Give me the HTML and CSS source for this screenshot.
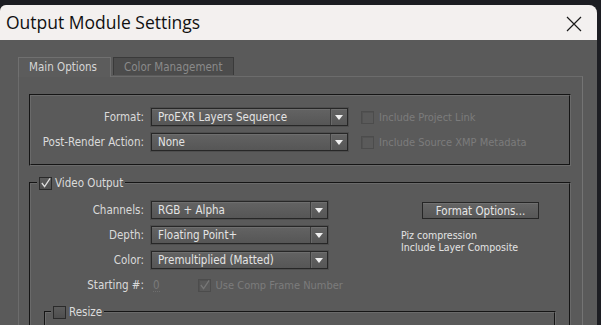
FILE: index.html
```html
<!DOCTYPE html>
<html lang="en">
<head>
    <meta charset="UTF-8">
    <title>Output Module Settings</title>
    <link rel="stylesheet" href="styles.css">
</head>
<body>

    <div class="window">
        <div class="titlebar">
            <span class="title">Output Module Settings</span>
            <svg class="close" width="16" height="16" viewBox="0 0 16 16">
                <path d="M1 1 L15 15 M15 1 L1 15" stroke="#1a1a1a" stroke-width="1.2" fill="none"/>
            </svg>
        </div>

        <div class="content">
            <div class="tabs">
                <div class="tab active">Main Options</div>
                <div class="tab">Color Management</div>
            </div>

            <div class="pane">
                <!-- 書き出し形式 -->
                <div class="group format-group">
                    <div class="form-row">
                        <span class="label">Format:</span>
                        <div class="select wide"><span class="value">ProEXR Layers Sequence</span><span class="arrow"></span></div>
                        <span class="check disabled"></span>
                        <span class="dim-text">Include Project Link</span>
                    </div>
                    <div class="form-row">
                        <span class="label">Post-Render Action:</span>
                        <div class="select wide"><span class="value">None</span><span class="arrow"></span></div>
                        <span class="check disabled"></span>
                        <span class="dim-text">Include Source XMP Metadata</span>
                    </div>
                </div>

                <!-- ビデオ出力 -->
                <fieldset class="group video-group">
                    <legend><span class="check checked">
                        <svg width="12" height="12" viewBox="0 0 12 12"><path d="M2 6 L5 10 L11 1" stroke="#dcdcdc" stroke-width="1.4" fill="none"/></svg>
                    </span>Video Output</legend>

                    <div class="video-body">
                        <div class="video-fields">
                            <div class="form-row">
                                <span class="label">Channels:</span>
                                <div class="select"><span class="value">RGB + Alpha</span><span class="arrow"></span></div>
                            </div>
                            <div class="form-row">
                                <span class="label">Depth:</span>
                                <div class="select"><span class="value">Floating Point+</span><span class="arrow"></span></div>
                            </div>
                            <div class="form-row">
                                <span class="label">Color:</span>
                                <div class="select"><span class="value">Premultiplied (Matted)</span><span class="arrow"></span></div>
                            </div>
                            <div class="form-row">
                                <span class="label">Starting #:</span>
                                <span class="start-num">0</span>
                                <span class="check disabled">
                                    <svg width="12" height="12" viewBox="0 0 12 12"><path d="M2 6 L5 10 L11 1" stroke="#777" stroke-width="1.4" fill="none"/></svg>
                                </span>
                                <span class="dim-text">Use Comp Frame Number</span>
                            </div>
                        </div>

                        <div class="video-side">
                            <button class="btn">Format Options...</button>
                            <div class="info">
                                Piz compression<br>
                                Include Layer Composite
                            </div>
                        </div>
                    </div>

                    <fieldset class="group resize-group">
                        <legend><span class="check"></span>Resize</legend>
                        <div class="resize-body"></div>
                    </fieldset>
                </fieldset>
            </div>
        </div>
    </div>

</body>
</html>
```

FILE: styles.css
```css
body {
    margin: 0;
    height: 325px;
    overflow: hidden;
    background-color: #1c1d22;
    font-family: "DejaVu Sans Condensed", "DejaVu Sans", sans-serif;
    font-stretch: condensed;
    font-size: 11.5px;
    color: #dcdcdc;
}

.window {
    margin-top: 5px;
    width: 597px;
    height: 320px;
    border-radius: 6px 8px 0 0;
    overflow: hidden;
    background-color: #5a5a5a;
}

.titlebar {
    height: 35px;
    background-color: #f3f0ef;
    display: flex;
    align-items: center;
    justify-content: space-between;
    padding: 0 15px 0 6px;
}

.title {
    font-family: "Open Sans", "Noto Sans", sans-serif;
    font-stretch: normal;
    font-size: 17.5px;
    color: #111;
    margin-top: -2px;
}

.close {
    margin-top: 2px;
}

.content {
    padding: 17px 14px 0 18px;
}

/* タブ */
.tabs {
    display: flex;
    gap: 2px;
    height: 19px;
}

.tab {
    box-sizing: border-box;
    width: 121px;
    padding-left: 10px;
    line-height: 18px;
    background-color: #4c4c4c;
    border: 1px solid #3a3a3a;
    border-bottom: none;
    color: #8a8a8a;
    height: 18px;
}

.tab.active {
    width: 93px;
    background-color: #5c5c5c;
    border-color: #707070;
    color: #d6d6d6;
    height: 20px;
    position: relative;
    z-index: 1;
}

.pane {
    border: 1px solid #6c6c6c;
    border-right-color: #747474;
    padding: 17px 11px 0 10px;
    height: 300px;
}

/* グループ枠 */
.group {
    border: 2px groove #6a6a6a;
    margin: 0;
    padding: 0;
}

.format-group {
    padding: 12px 0 13px;
    display: flex;
    flex-direction: column;
    gap: 7px;
}

.form-row {
    display: flex;
    align-items: center;
    height: 18px;
    white-space: nowrap;
}

.label {
    width: 113px;
    margin-right: 7px;
    text-align: right;
    color: #dadada;
}

.select {
    width: 175px;
    height: 16px;
    border: 1px solid #272727;
    background: linear-gradient(#636363, #565656);
    box-shadow: inset 0 1px 0 #6e6e6e, 0 0 0 1px #4e4e4e;
    display: flex;
    align-items: center;
    color: #e4e4e4;
}

.select.wide {
    width: 195px;
}

.select .value {
    flex: 1;
    padding-left: 6px;
}

.arrow {
    width: 16px;
    height: 16px;
    border-left: 1px solid #3c3c3c;
    box-shadow: inset 1px 0 0 #6a6a6a;
    display: flex;
    align-items: center;
    justify-content: center;
}

.arrow::after {
    content: "";
    border-left: 4px solid transparent;
    border-right: 4px solid transparent;
    border-top: 5px solid #f0f0f0;
}

.check {
    display: inline-flex;
    align-items: center;
    justify-content: center;
    width: 11px;
    height: 11px;
    border: 1px solid #2a2a2a;
    background: linear-gradient(#5c5c5c, #4e4e4e);
    flex-shrink: 0;
}

.check.disabled {
    border-color: #4c4c4c;
    background: #5a5a5a;
    box-shadow: inset 1px 1px 0 #525252;
}

.format-group .check {
    margin-left: 13px;
    margin-right: 5px;
}

.dim-text {
    font-size: 11px;
    color: #7c7c7c;
}

/* ビデオ出力 */
.video-group {
    margin-top: 10px;
    height: 200px;
}

.video-group legend,
.resize-group legend {
    display: flex;
    align-items: center;
    gap: 3px;
    padding: 0 2px;
    font-size: 11.5px;
}

.video-group > legend {
    margin-left: 6px;
}

.video-body {
    display: flex;
    padding-top: 11px;
}

.video-fields {
    display: flex;
    flex-direction: column;
    gap: 7px;
    width: 370px;
}

.start-num {
    color: #7a7a7a;
    border-bottom: 1px dotted #6e6e6e;
    margin-left: 2px;
    line-height: 12px;
}

.video-fields .check {
    margin-left: 38px;
    margin-right: 5px;
}

.video-side {
    padding-top: 1px;
}

.btn {
    margin-left: 21px;
    width: 117px;
    height: 17px;
    padding: 0;
    font-family: inherit;
    font-stretch: condensed;
    font-size: 11.5px;
    color: #e6e6e6;
    border: 1px solid #262626;
    background: linear-gradient(#656565, #575757);
    box-shadow: inset 0 1px 0 #707070;
}

.info {
    margin-top: 10px;
    font-size: 10.5px;
    line-height: 12px;
    color: #e4e4e4;
}

.resize-group {
    margin: 11px 13px 0;
    height: 60px;
}

.resize-group > legend {
    margin-left: 5px;
}
```
